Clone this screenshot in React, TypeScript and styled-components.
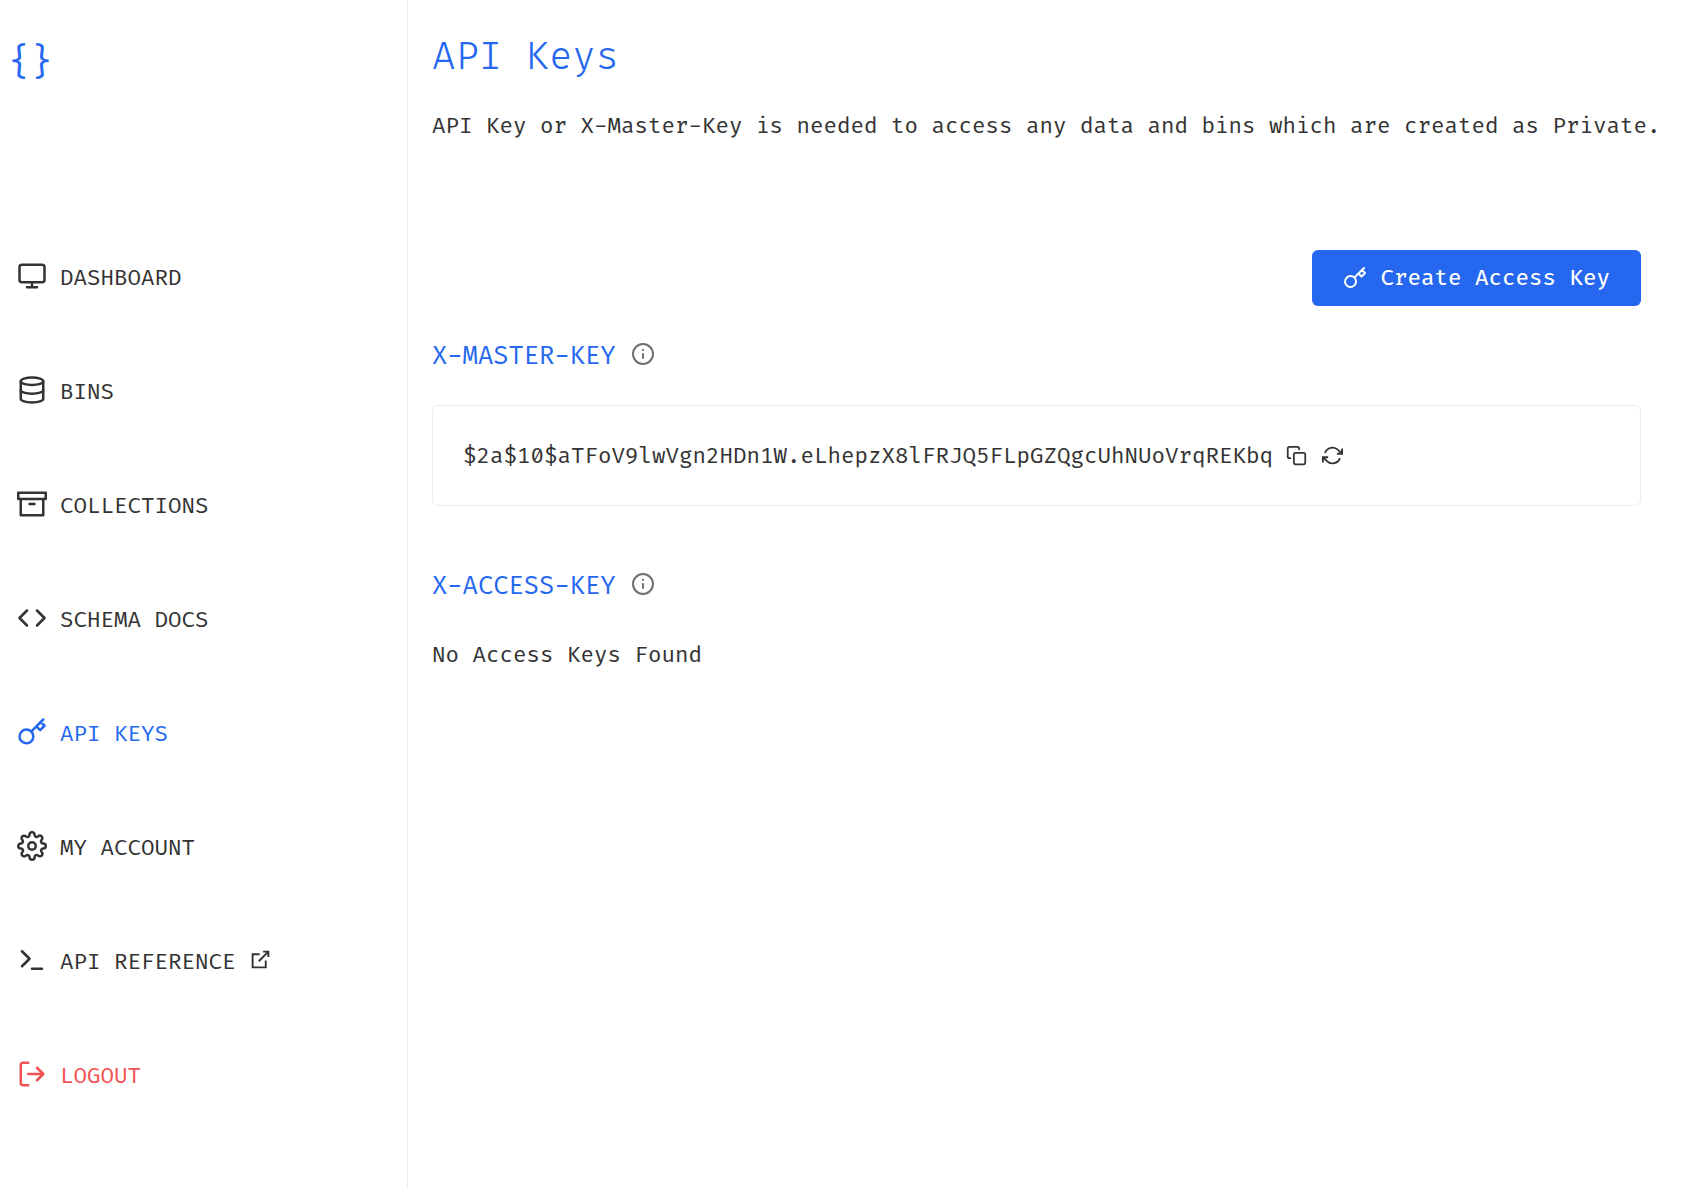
import React from "react";
import styled, { createGlobalStyle, css } from "styled-components";

const colors = {
  blue: "#2568ef",
  text: "#333333",
  red: "#f05252",
  line: "#ececec",
  muted: "#6f6f6f",
};

const GlobalStyle = createGlobalStyle`
  *, *::before, *::after { box-sizing: border-box; }
  body {
    margin: 0;
    background: #fff;
    color: ${colors.text};
    font-family: "Fira Code", "Fira Mono", "DejaVu Sans Mono", monospace;
    font-size: 21.94px;
    font-variant-ligatures: none;
  }
`;

const Page = styled.div`
  display: flex;
  height: 1188px;
  overflow: hidden;
`;

const Sidebar = styled.aside`
  flex: none;
  width: 408px;
  border-right: 1px solid ${colors.line};
`;

const Logo = styled.div`
  height: 48px;
  margin: 39px 0 0 8px;
  color: ${colors.blue};
  font-size: 36.5px;
  line-height: 48px;
  font-weight: 400;
`;

const Nav = styled.nav`
  display: flex;
  flex-direction: column;
  gap: 83px;
  padding: 176px 0 0 17px;
`;

const NavItem = styled.a<{ $tone?: string }>`
  display: flex;
  align-items: center;
  gap: 13px;
  height: 31px;
  color: ${(p) => p.$tone ?? colors.text};
  line-height: 31px;
  text-decoration: none;
`;

const NavLabel = styled.span<{ $linked?: boolean }>`
  margin-right: ${(p) => (p.$linked ? 1 : 0)}px;
`;

const Svg = styled.svg<{ $size: number; $weight?: number; $sharp?: boolean; $lift?: number }>`
  flex: none;
  width: ${(p) => p.$size}px;
  height: ${(p) => p.$size}px;
  margin-bottom: ${(p) => p.$lift ?? 0}px;
  fill: none;
  stroke: currentColor;
  stroke-width: ${(p) => p.$weight ?? 2};
  ${(p) =>
    p.$sharp
      ? css`
          stroke-linecap: butt;
          stroke-linejoin: miter;
        `
      : css`
          stroke-linecap: round;
          stroke-linejoin: round;
        `}
`;

const Main = styled.main`
  flex: 1;
  min-width: 0;
  display: flex;
  flex-direction: column;
  padding: 33px 49px 0 24px;
`;

const Title = styled.h1`
  margin: 0;
  color: ${colors.blue};
  font-size: 38.03px;
  font-weight: 300;
  line-height: 49px;
`;

const Intro = styled.p`
  margin: 27px 0 0;
  line-height: 35px;
  white-space: nowrap;
`;

const CreateButton = styled.button`
  display: flex;
  align-items: center;
  align-self: flex-end;
  gap: 13.5px;
  height: 56px;
  margin-top: 106px;
  padding: 0 31px;
  border: 0;
  border-radius: 6px;
  background: ${colors.blue};
  color: #fff;
  font: inherit;
  font-weight: 450;
`;

const ButtonLabel = styled.span`
  padding-top: 1px;
`;

const SectionTitle = styled.h2<{ $top: number }>`
  display: flex;
  align-items: center;
  gap: 15.5px;
  height: 37px;
  margin: ${(p) => p.$top}px 0 0;
  color: ${colors.blue};
  font-size: 24.86px;
  font-weight: 400;
  line-height: 37px;
`;

const Hint = styled.span`
  display: flex;
  color: ${colors.muted};
`;

const KeyCard = styled.div`
  display: flex;
  align-items: center;
  gap: 15px;
  height: 101px;
  margin-top: 30px;
  padding: 0 30px;
  border: 1px solid ${colors.line};
  border-radius: 6px;
`;

const KeyValue = styled.span`
  margin-right: -2.5px;
  padding-top: 2px;
`;

const Empty = styled.p`
  margin: 33px 0 0;
  line-height: 35px;
`;

const shapes: Record<string, React.ReactNode> = {
  monitor: (
    <>
      <rect x="2" y="3" width="20" height="14" rx="2" />
      <path d="M8 21h8M12 17v4" />
    </>
  ),
  database: (
    <>
      <ellipse cx="12" cy="5" rx="9" ry="3" />
      <path d="M21 12c0 1.66-4 3-9 3s-9-1.34-9-3" />
      <path d="M3 5v14c0 1.66 4 3 9 3s9-1.34 9-3V5" />
    </>
  ),
  archive: (
    <>
      <path d="M21 8v13H3V8" />
      <rect x="1" y="3" width="22" height="5" />
      <path d="M10 12h4" />
    </>
  ),
  code: <path d="M16 18l6-6-6-6M8 6l-6 6 6 6" />,
  key: (
    <path d="M21 2l-2 2m-7.61 7.61a5.5 5.5 0 1 1-7.778 7.778 5.5 5.5 0 0 1 7.777-7.777zm0 0L15.5 7.5m0 0l3 3L22 7l-3-3m-3.5 3.5L19 4" />
  ),
  settings: (
    <>
      <circle cx="12" cy="12" r="3" />
      <path d="M19.4 15a1.65 1.65 0 0 0 .33 1.82l.06.06a2 2 0 0 1 0 2.83 2 2 0 0 1-2.83 0l-.06-.06a1.65 1.65 0 0 0-1.82-.33 1.65 1.65 0 0 0-1 1.51V21a2 2 0 0 1-2 2 2 2 0 0 1-2-2v-.09A1.65 1.65 0 0 0 9 19.4a1.65 1.65 0 0 0-1.82.33l-.06.06a2 2 0 0 1-2.83 0 2 2 0 0 1 0-2.83l.06-.06a1.65 1.65 0 0 0 .33-1.82 1.65 1.65 0 0 0-1.51-1H3a2 2 0 0 1-2-2 2 2 0 0 1 2-2h.09A1.65 1.65 0 0 0 4.6 9a1.65 1.65 0 0 0-.33-1.82l-.06-.06a2 2 0 0 1 0-2.83 2 2 0 0 1 2.83 0l.06.06a1.65 1.65 0 0 0 1.82.33H9a1.65 1.65 0 0 0 1-1.51V3a2 2 0 0 1 2-2 2 2 0 0 1 2 2v.09a1.65 1.65 0 0 0 1 1.51 1.65 1.65 0 0 0 1.82-.33l.06-.06a2 2 0 0 1 2.83 0 2 2 0 0 1 0 2.83l-.06.06a1.65 1.65 0 0 0-.33 1.82V9a1.65 1.65 0 0 0 1.51 1H21a2 2 0 0 1 2 2 2 2 0 0 1-2 2h-.09a1.65 1.65 0 0 0-1.51 1z" />
    </>
  ),
  terminal: <path d="M4 17l6-6-6-6M12 19h8" />,
  logout: <path d="M9 21H5a2 2 0 0 1-2-2V5a2 2 0 0 1 2-2h4M16 17l5-5-5-5M21 12H9" />,
  external: <path d="M18 13v8H3V6h8M15 3h6v6M10 14L21 3" />,
  info: (
    <>
      <circle cx="12" cy="12" r="10" />
      <path d="M12 11.3v5.4M12 7v1.7" />
    </>
  ),
  copy: (
    <>
      <rect x="9" y="9" width="13" height="13" rx="2" />
      <path d="M5 15H4a2 2 0 0 1-2-2V4a2 2 0 0 1 2-2h9a2 2 0 0 1 2 2v1" />
    </>
  ),
  refresh: (
    <path d="M23 4v6h-6M1 20v-6h6M3.51 9a9 9 0 0 1 14.85-3.36L23 10M1 14l4.64 4.36A9 9 0 0 0 20.49 15" />
  ),
};

type IconProps = { name: string; size: number; weight?: number; sharp?: boolean; lift?: number };

const Icon = ({ name, size, weight, sharp, lift }: IconProps) => (
  <Svg viewBox="0 0 24 24" $size={size} $weight={weight} $sharp={sharp} $lift={lift} overflow="visible">
    {shapes[name]}
  </Svg>
);

const navItems = [
  { icon: "monitor", label: "DASHBOARD" },
  { icon: "database", label: "BINS" },
  { icon: "archive", label: "COLLECTIONS" },
  { icon: "code", label: "SCHEMA DOCS" },
  { icon: "key", label: "API KEYS", tone: colors.blue },
  { icon: "settings", label: "MY ACCOUNT" },
  { icon: "terminal", label: "API REFERENCE", external: true },
  { icon: "logout", label: "LOGOUT", tone: colors.red },
];

export default function App() {
  return (
    <>
      <GlobalStyle />
      <Page>
        <Sidebar>
          <Logo>{"{}"}</Logo>
          <Nav>
            {navItems.map((item) => (
              <NavItem key={item.label} $tone={item.tone}>
                <Icon name={item.icon} size={30} lift={6} />
                <NavLabel $linked={item.external}>{item.label}</NavLabel>
                {item.external && <Icon name="external" size={21} weight={2.2} sharp lift={6} />}
              </NavItem>
            ))}
          </Nav>
        </Sidebar>
        <Main>
          <Title>API Keys</Title>
          <Intro>
            API Key or X-Master-Key is needed to access any data and bins which are created as Private.
          </Intro>
          <CreateButton>
            <Icon name="key" size={24} weight={2} />
            <ButtonLabel>Create Access Key</ButtonLabel>
          </CreateButton>
          <SectionTitle $top={32}>
            X-MASTER-KEY
            <Hint>
              <Icon name="info" size={24} sharp lift={5} />
            </Hint>
          </SectionTitle>
          <KeyCard>
            <KeyValue>$2a$10$aTFoV9lwVgn2HDn1W.eLhepzX8lFRJQ5FLpGZQgcUhNUoVrqREKbq</KeyValue>
            <Icon name="copy" size={21} />
            <Icon name="refresh" size={21} weight={2.1} sharp />
          </KeyCard>
          <SectionTitle $top={62}>
            X-ACCESS-KEY
            <Hint>
              <Icon name="info" size={24} sharp lift={5} />
            </Hint>
          </SectionTitle>
          <Empty>No Access Keys Found</Empty>
        </Main>
      </Page>
    </>
  );
}
